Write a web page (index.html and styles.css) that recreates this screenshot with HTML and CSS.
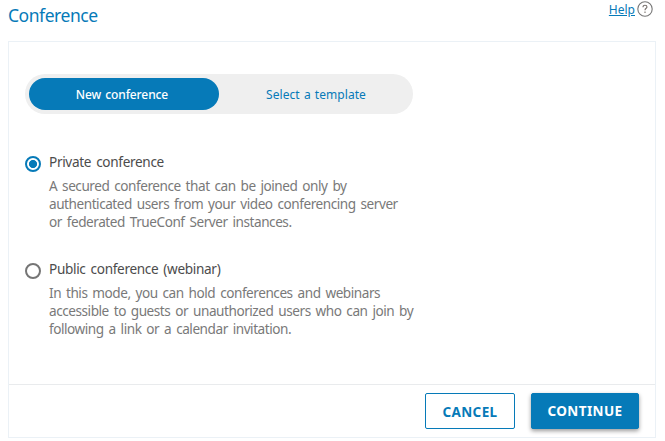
FILE: index.html
```html
<!DOCTYPE html>
<html lang="en">
<head>
<meta charset="utf-8">
<title>Conference</title>
<link rel="stylesheet" href="styles.css">
</head>
<body>
<header class="header">
  <h1 class="title">Conference</h1>
  <div class="help"><a class="help-link" href="#">Help</a><svg class="help-icon" viewBox="0 0 16 16" width="16" height="16"><circle cx="8" cy="8" r="7.2" fill="none" stroke="#777" stroke-width="1.1"/><path d="M6 6.2C6 4.8 6.8 4.3 8 4.3S10 5 10 6.1C10 7.3 8 7.4 8 9.2M8 10.6V11.9" fill="none" stroke="#77706c" stroke-width="1.1"/></svg></div>
</header>
<main class="card">
  <div class="body">
    <nav class="tabs">
      <a class="tab active">New conference</a>
      <a class="tab">Select a template</a>
    </nav>
    <section class="option">
      <span class="radio checked"></span>
      <div>
        <h2 class="name">Private conference</h2>
        <p class="desc">A secured conference that can be joined only by<br>authenticated users from your video conferencing server<br>or federated TrueConf Server instances.</p>
      </div>
    </section>
    <section class="option">
      <span class="radio"></span>
      <div>
        <h2 class="name">Public conference (webinar)</h2>
        <p class="desc">In this mode, you can hold conferences and webinars<br>accessible to guests or unauthorized users who can join by<br>following a link or a calendar invitation.</p>
      </div>
    </section>
  </div>
  <footer class="footer">
    <button class="btn cancel">CANCEL</button>
    <button class="btn continue">CONTINUE</button>
  </footer>
</main>
</body>
</html>
```

FILE: styles.css
```css
* { box-sizing: border-box; }
body { margin: 0; width: 665px; height: 441px; overflow: hidden; background: #fff; font-family: "Noto Sans", "Open Sans", sans-serif; }
.header { display: flex; justify-content: space-between; height: 41px; padding: 0 12px 0 8px; color: #067ab8; }
.title { margin: 3px 0 0; font-size: 17.5px; line-height: 24px; font-weight: 400; letter-spacing: -0.45px; }
.help { display: flex; padding-top: 1px; }
.help-link { color: #067ab8; font-size: 12px; line-height: 17px; height: 17px; }
.help-icon { margin-left: 2px; }
.card { width: 648px; height: 397px; margin-left: 8px; border: 1px solid #ebf1f6; display: flex; flex-direction: column; }
.body { flex: 1; padding: 32px 16px 0; }
.tabs { display: flex; width: 388px; height: 40px; margin-bottom: 37px; padding: 4px; border-radius: 20px; background: #efefef; }
.tab { flex: 1; padding-left: 4px; border-radius: 16px; color: #067ab8; font-size: 12px; line-height: 34px; text-align: center; letter-spacing: 0.05px; word-spacing: 1px; }
.tab.active { padding: 0 4px 0 0; background: #067ab8; color: #fff; font-weight: 500; letter-spacing: -0.1px; }
.option { display: flex; height: 107px; }
.radio { width: 16px; height: 16px; margin: 5px 8px 0 0; border: 2px solid #757575; border-radius: 50%; }
.radio.checked { border-color: #067ab8; background: radial-gradient(circle, #067ab8 3.7px, #fff 4.4px); }
.name { margin: 1px 0 0; color: #4c4c4c; font-size: 13.6px; line-height: 20px; font-weight: 400; letter-spacing: -0.33px; word-spacing: 1.8px; }
.desc { margin: 5px 0 0; color: #797979; font-size: 13.6px; line-height: 18px; white-space: nowrap; letter-spacing: -0.46px; word-spacing: 1.8px; }
.footer { display: flex; justify-content: flex-end; gap: 16px; height: 53px; padding: 8px 16px 0 0; border-top: 1px solid #e9ebed; }
.btn { height: 36px; padding: 0; border: 1px solid #067ab8; border-radius: 2px; font-family: inherit; font-size: 13.5px; line-height: 34px; font-weight: 700; letter-spacing: 0.4px; }
.cancel { width: 90px; padding-top: 1px; background: #fff; color: #067ab8; }
.continue { width: 108px; background: #067ab8; color: #fff; box-shadow: 0 2px 4px rgba(0, 0, 0, 0.4); }
```
